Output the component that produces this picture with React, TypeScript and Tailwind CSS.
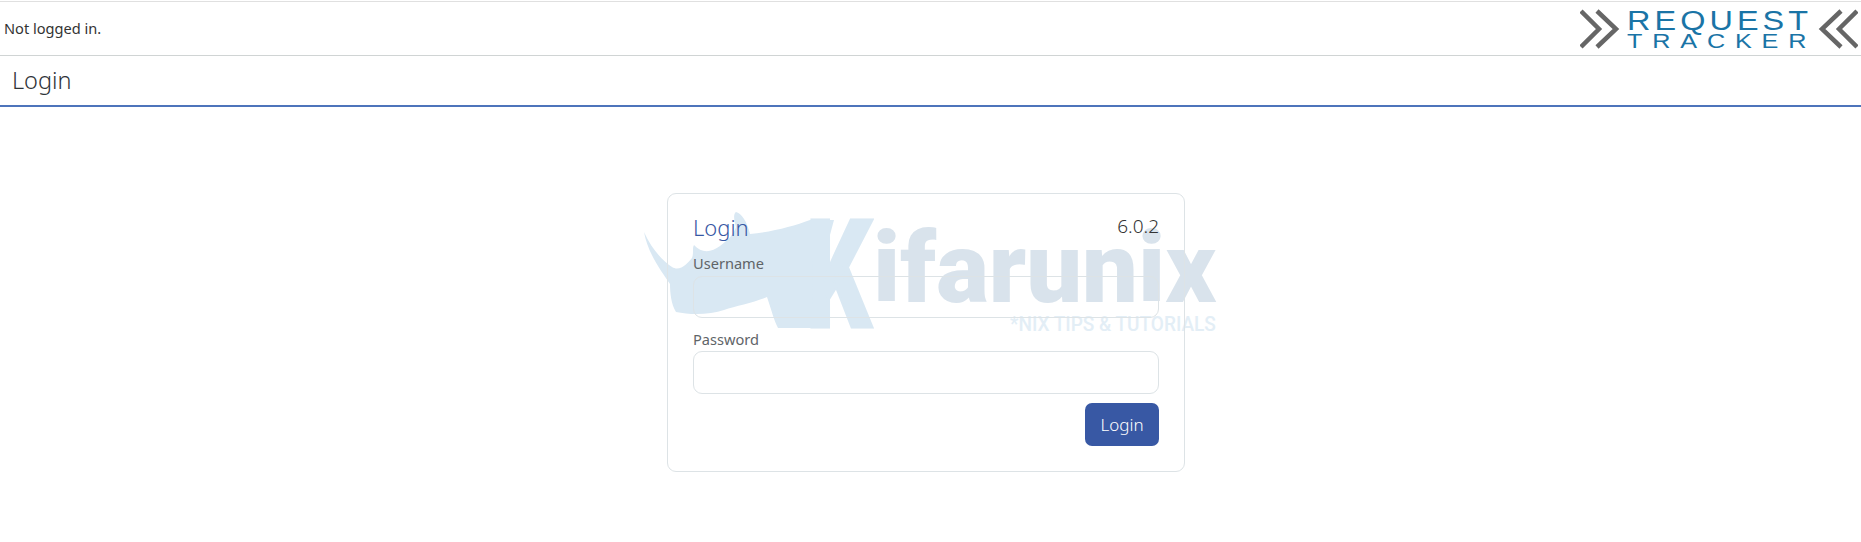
const Chevrons = ({ flip }: { flip?: boolean }) => (
    <svg width="40" height="40" viewBox="0 0 40 40" className={flip ? "-scale-x-100" : ""}>
        <path d="M1 2 L19 20 L1 38 M17 2 L36 20 L17 38" fill="none" stroke="#666666" strokeWidth="4.5" />
    </svg>
);

// Marca d'água atrás do formulário
const Watermark = () => (
    <div className="absolute left-[644px] top-[212px] w-[580px] h-[125px] pointer-events-none select-none font-['Roboto',sans-serif]">
        <svg width="230" height="125" viewBox="0 0 230 125" className="absolute left-0 top-0">
            <path
                d="M0 20 C8 38 20 50 28 55 C36 60 44 51 48 46 C50 41 48 36 50 33 C58 42 68 40 76 34 C84 28 90 22 92 15 C90 8 89 2 92 0 C97 1 103 9 106 22 C128 20 150 14 166 8 L190 8 L176 60 L186 116 L134 116 C130 108 128 100 123 85 C112 90 92 94 80 98 C66 103 46 103 32 100 C27 92 26 80 26 72 C18 60 4 42 0 20 Z"
                fill="#d9e8f3"
            />
        </svg>
        <span className="absolute left-[162px] top-[-11px] text-[150px] leading-none font-black text-[#d9e8f3] origin-left scale-x-[0.68] [-webkit-text-stroke:3px_#d9e8f3]">K</span>
        <span className="absolute left-[229px] top-[7px] text-[99px] leading-none font-black text-[#d9e3ec]">ifarunix</span>
        <span className="absolute left-[366px] top-[97px] text-[21px] leading-[30px] font-medium text-[#e3eef6] whitespace-nowrap origin-left scale-x-[0.905]">*NIX TIPS &amp; TUTORIALS</span>
    </div>
);

export default function App() {
    return (
        <div className="relative min-h-[542px] bg-white text-[#333] font-['Noto_Sans',sans-serif] overflow-hidden">
            <Watermark />

            <div className="relative">
                {/* Topo */}
                <div className="mt-px border-y border-[#e0e0e0] border-b-[#d0d4d4] h-[55px] flex items-center justify-between pl-1 pr-[3px]">
                    <span className="text-[14.6px]">Not logged in.</span>
                    <div className="flex items-center gap-[9px]">
                        <Chevrons />
                        <div className="flex flex-col w-[180px] -ml-[2px] mr-[2px] text-[#1a74a6] font-['Liberation_Sans',sans-serif]">
                            <span className="text-[27px] h-[24px] tracking-[3.4px] leading-[24px] origin-left scale-x-[1.2] whitespace-nowrap">REQUEST</span>
                            <span className="text-[21px] h-[16px] tracking-[8.2px] leading-[16px] origin-left scale-x-[1.2] whitespace-nowrap">TRACKER</span>
                        </div>
                        <Chevrons flip />
                    </div>
                </div>

                {/* Título */}
                <div className="h-[51px] border-b-2 border-[#4e74bb] flex items-center pl-[12px]">
                    <h1 className="text-[23.5px] font-light text-[#2f3338]">Login</h1>
                </div>

                {/* Cartão de login */}
                <div className="ml-[667px] mt-[86px] w-[518px] h-[279px] border border-[#dde3e6] rounded-[9px] px-[25px] pt-[18px]">
                    <div className="flex justify-between items-start h-[32px]">
                        <span className="text-[22px] leading-[30px] font-light text-[#3858a4]">Login</span>
                        <span className="text-[19px] leading-[26px] font-light mt-px">6.0.2</span>
                    </div>
                    <label className="block text-[14.6px] text-[#5f6468] leading-[20px] mt-[9px]">Username</label>
                    <input className="block w-full h-[42px] mt-[3px] border border-[#dde3e6] rounded-[9px]" />
                    <label className="block text-[14.6px] text-[#5f6468] leading-[20px] mt-[11px]">Password</label>
                    <input type="password" className="block w-full h-[43px] mt-[2px] border border-[#dde3e6] rounded-[9px]" />
                    <div className="flex justify-end mt-[9px]">
                        <button className="w-[74px] h-[43px] rounded-[7px] bg-[#3858a4] text-white text-[17px] font-light">Login</button>
                    </div>
                </div>
            </div>
        </div>
    );
}
